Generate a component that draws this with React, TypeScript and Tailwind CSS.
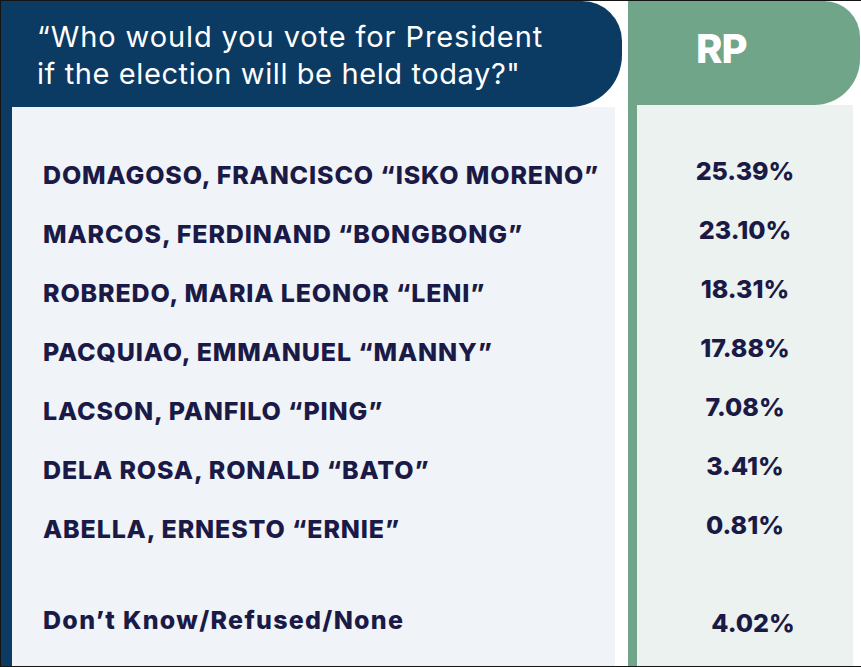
const candidates = [
  { name: 'DOMAGOSO, FRANCISCO “ISKO MORENO”', pct: '25.39%' },
  { name: 'MARCOS, FERDINAND “BONGBONG”', pct: '23.10%' },
  { name: 'ROBREDO, MARIA LEONOR “LENI”', pct: '18.31%' },
  { name: 'PACQUIAO, EMMANUEL “MANNY”', pct: '17.88%' },
  { name: 'LACSON, PANFILO “PING”', pct: '7.08%' },
  { name: 'DELA ROSA, RONALD “BATO”', pct: '3.41%' },
  { name: 'ABELLA, ERNESTO “ERNIE”', pct: '0.81%' },
]

const font = { fontFamily: 'Inter, "Noto Sans", sans-serif' }

export default function App() {
  return (
    <div
      className="flex h-[667px] w-[861px] overflow-hidden border-y border-l border-[#141414] bg-white text-[#1b1a46]"
      style={font}
    >
      {/* question column */}
      <div className="flex w-[621px] flex-col">
        <div className="h-[106px] rounded-tr-[40px] rounded-br-[52px] bg-[#0b3a62] pl-[36px] pt-[17px] text-[29px] font-normal leading-[37px] tracking-[0.6px] text-white">
          <p className="tracking-[0.9px]">“Who would you vote for President</p>
          <p>if the election will be held today?"</p>
        </div>
        <div className="flex flex-1">
          <div className="w-[11px] bg-[#0b3a62]" />
          <div className="w-[603px] bg-[#f0f4f8] pl-[31px] pt-[39px]">
            {candidates.map((c) => (
              <div key={c.name} className="flex h-[59px] items-center text-[25px] font-extrabold tracking-[0.85px]">
                {c.name}
              </div>
            ))}
            <div className="mt-[32px] flex h-[59px] items-center text-[25px] font-extrabold tracking-[1.3px]">
              Don’t Know/Refused/None
            </div>
          </div>
        </div>
      </div>

      <div className="w-[6px]" />

      {/* RP column */}
      <div className="flex w-[232px] flex-col">
        <div className="flex h-[104px] items-center rounded-tr-[36px] rounded-br-[46px] bg-[#70a589] pb-[9px] pl-[68px] text-[40px] font-extrabold tracking-[-1px] text-white">
          RP
        </div>
        <div className="flex flex-1">
          <div className="w-[9px] bg-[#70a589]" />
          <div className="w-[216px] bg-[#ecf2f0] pt-[39px]">
            {candidates.map((c) => (
              <div key={c.pct} className="flex h-[59px] -translate-y-[2px] items-center justify-center text-[25px] font-extrabold">
                {c.pct}
              </div>
            ))}
            <div className="mt-[37px] flex h-[59px] items-center justify-center pl-[16px] text-[25px] font-extrabold">
              4.02%
            </div>
          </div>
        </div>
      </div>
    </div>
  )
}
